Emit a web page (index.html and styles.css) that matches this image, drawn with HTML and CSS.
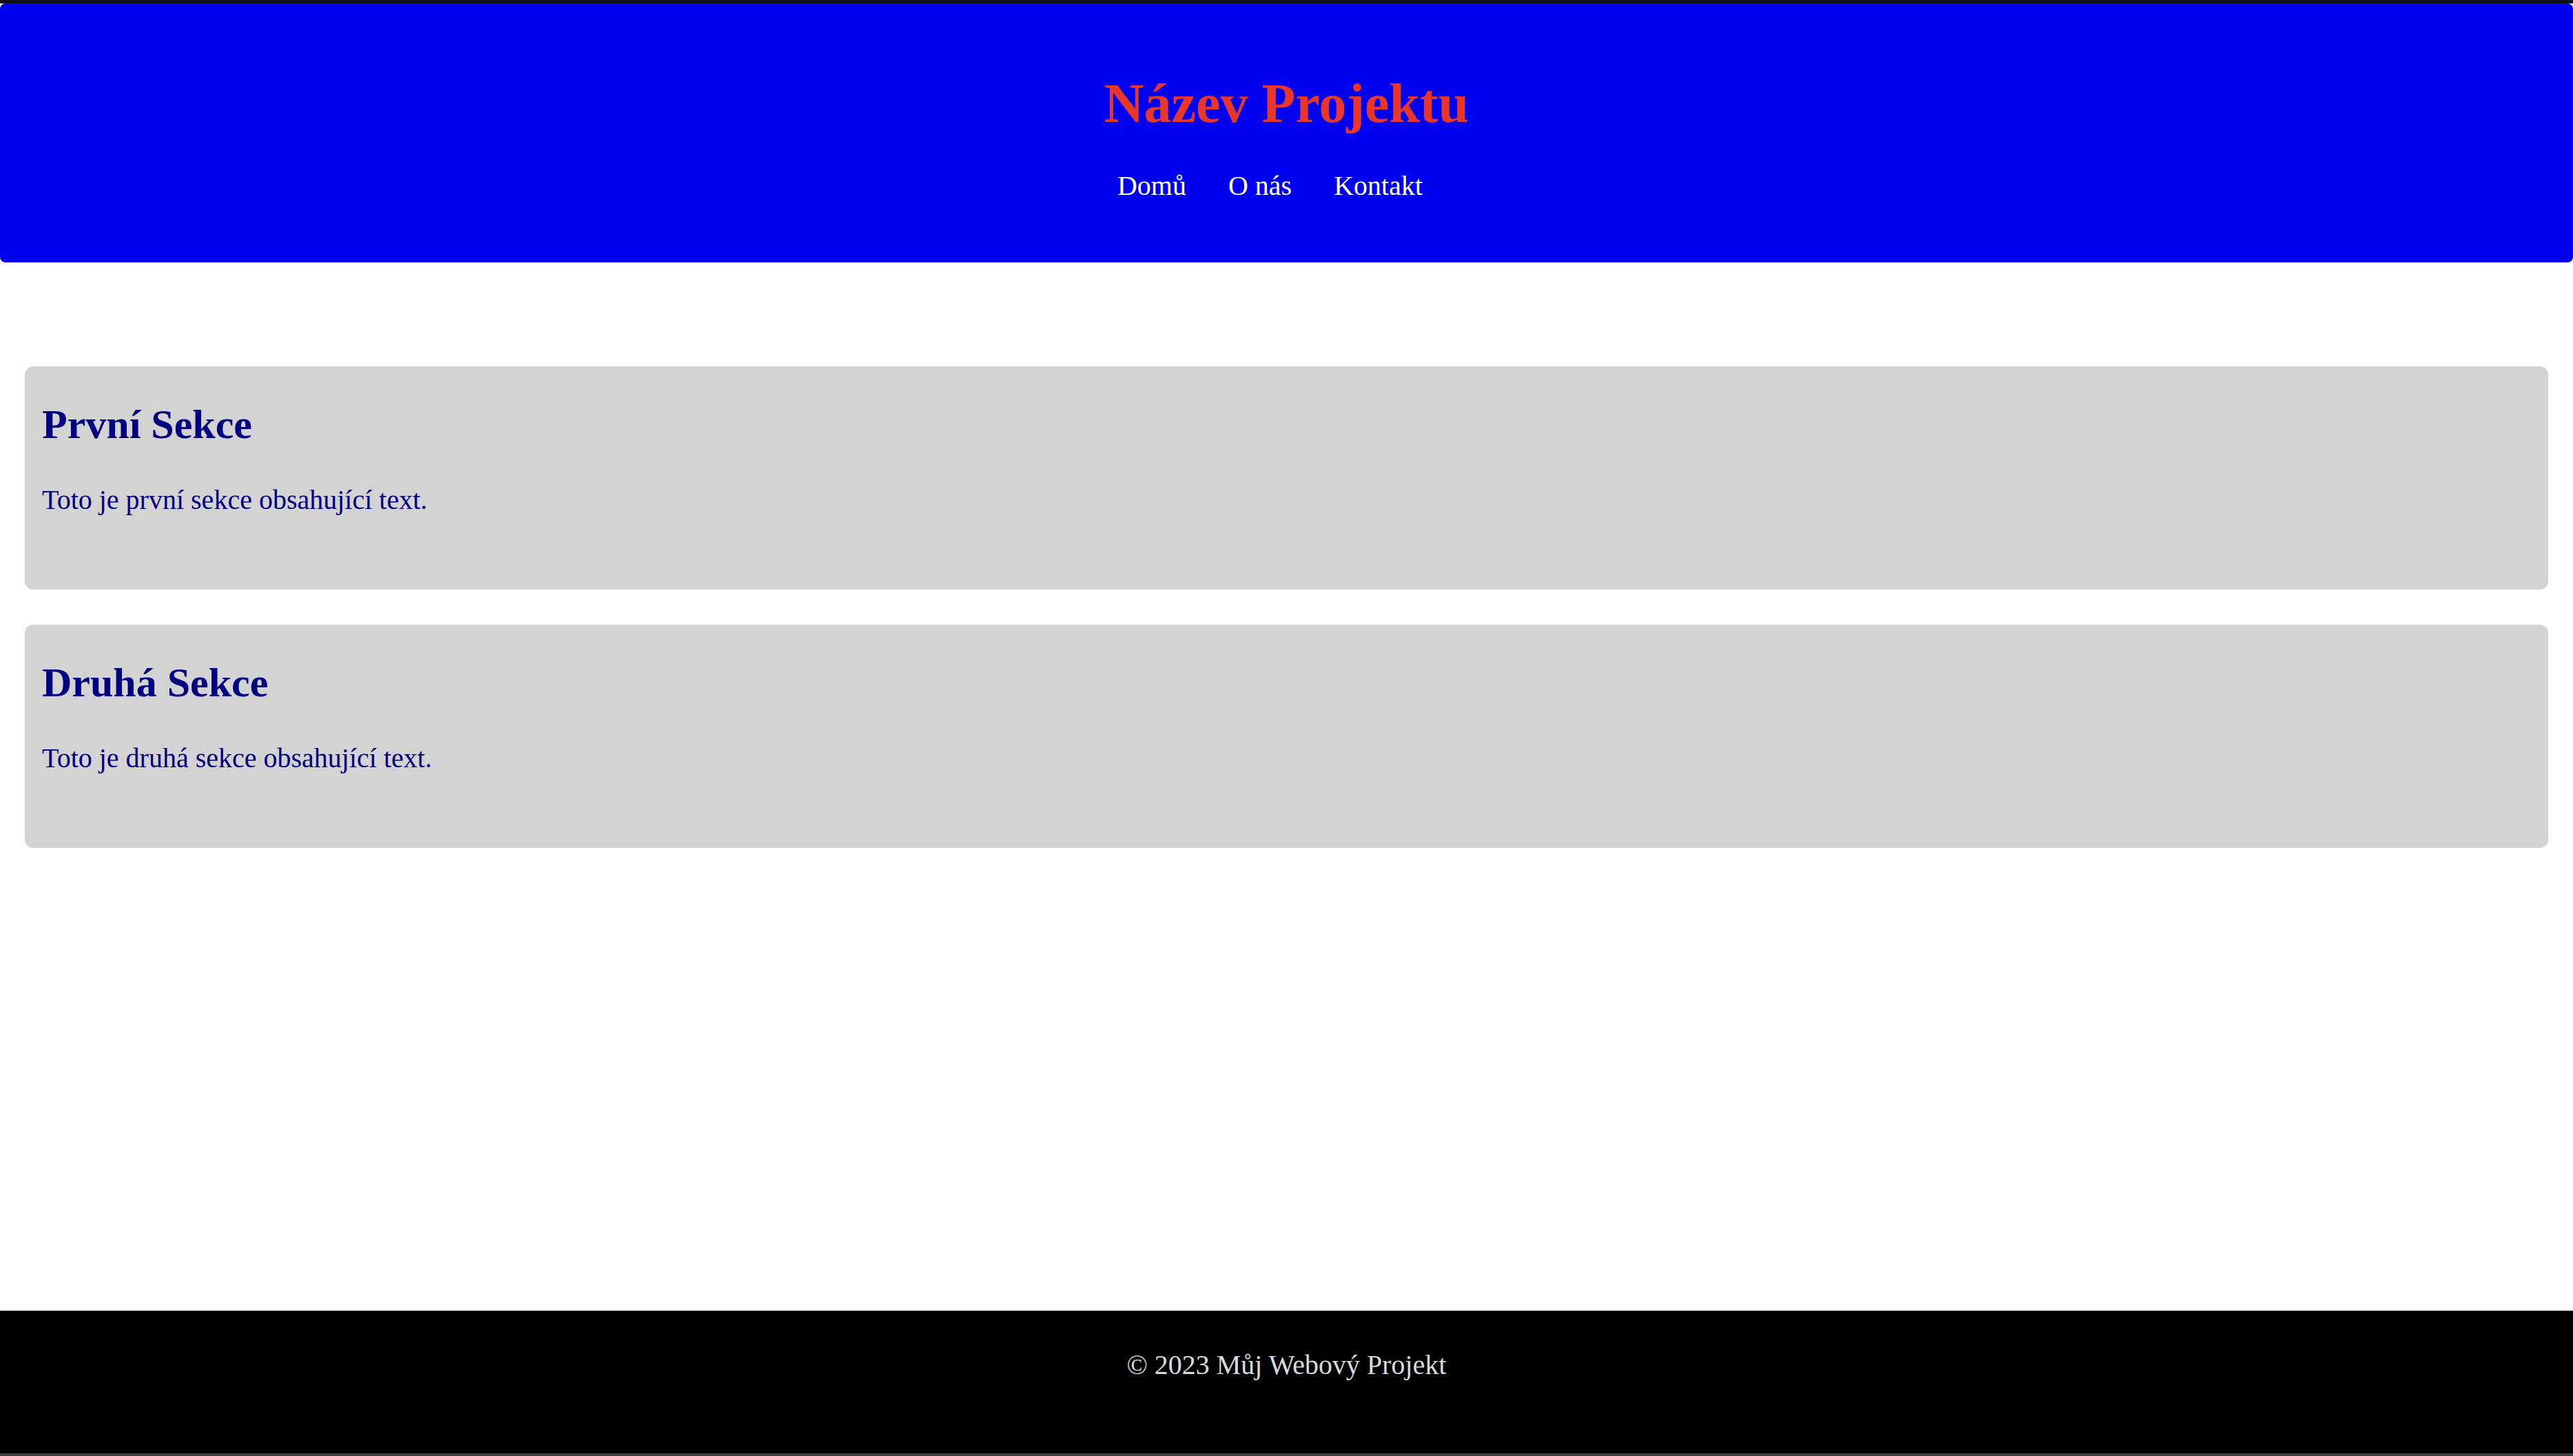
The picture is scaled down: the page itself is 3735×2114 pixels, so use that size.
FILE: index.html
```html
<!DOCTYPE html>
<html lang="cs">
<head>
<meta charset="utf-8">
<title>Název Projektu</title>
<link rel="stylesheet" href="styles.css">
</head>
<body>
<div class="page">
  <header class="site-header">
    <h1 class="site-title">Název Projektu</h1>
    <nav>
      <ul class="nav-list">
        <li><a href="#">Domů</a></li>
        <li><a href="#">O nás</a></li>
        <li><a href="#">Kontakt</a></li>
      </ul>
    </nav>
  </header>
  <main class="content">
    <section class="card">
      <h2 class="card-title">První Sekce</h2>
      <p class="card-text">Toto je první sekce obsahující text.</p>
    </section>
    <section class="card">
      <h2 class="card-title">Druhá Sekce</h2>
      <p class="card-text">Toto je druhá sekce obsahující text.</p>
    </section>
  </main>
  <footer class="site-footer">
    <p class="footer-text">&copy; 2023 Můj Webový Projekt</p>
  </footer>
</div>
</body>
</html>
```

FILE: styles.css
```css
html, body {
  margin: 0;
  padding: 0;
}

body {
  font-family: "Liberation Serif", "Times New Roman", serif;
  font-size: 40px;
  background: #ffffff;
}

.page {
  display: flex;
  flex-direction: column;
  min-height: 100vh;
  box-sizing: border-box;
  border-top: 5px solid #101018;
  border-bottom: 4px solid #3e3e3e;
}

.site-header {
  background: #0000f0;
  border-radius: 8px;
  padding: 101px 0 89px;
  text-align: center;
}

.site-title {
  margin: 0;
  font-size: 80px;
  font-weight: bold;
  line-height: 88px;
  color: #e8372a;
}

.nav-list {
  list-style: none;
  margin: 54px 0 0;
  padding: 0 48px 0 0;
  display: flex;
  justify-content: center;
  gap: 61px;
  line-height: 44px;
}

.nav-list a {
  color: #ffffff;
  text-decoration: none;
}

.content {
  flex: 1;
  display: flex;
  flex-direction: column;
  gap: 51px;
  padding: 151px 36px 0;
}

.card {
  background: #d3d3d3;
  border-radius: 12px;
  padding: 51px 25px 107px;
  color: #000080;
}

.card-title {
  margin: 0;
  font-size: 60px;
  font-weight: bold;
  line-height: 66px;
}

.card-text {
  margin: 54px 0 0;
  line-height: 46px;
}

.site-footer {
  background: #000000;
  padding: 57px 0 106px;
  text-align: center;
}

.footer-text {
  margin: 0;
  line-height: 44px;
  color: #dadada;
}
```
